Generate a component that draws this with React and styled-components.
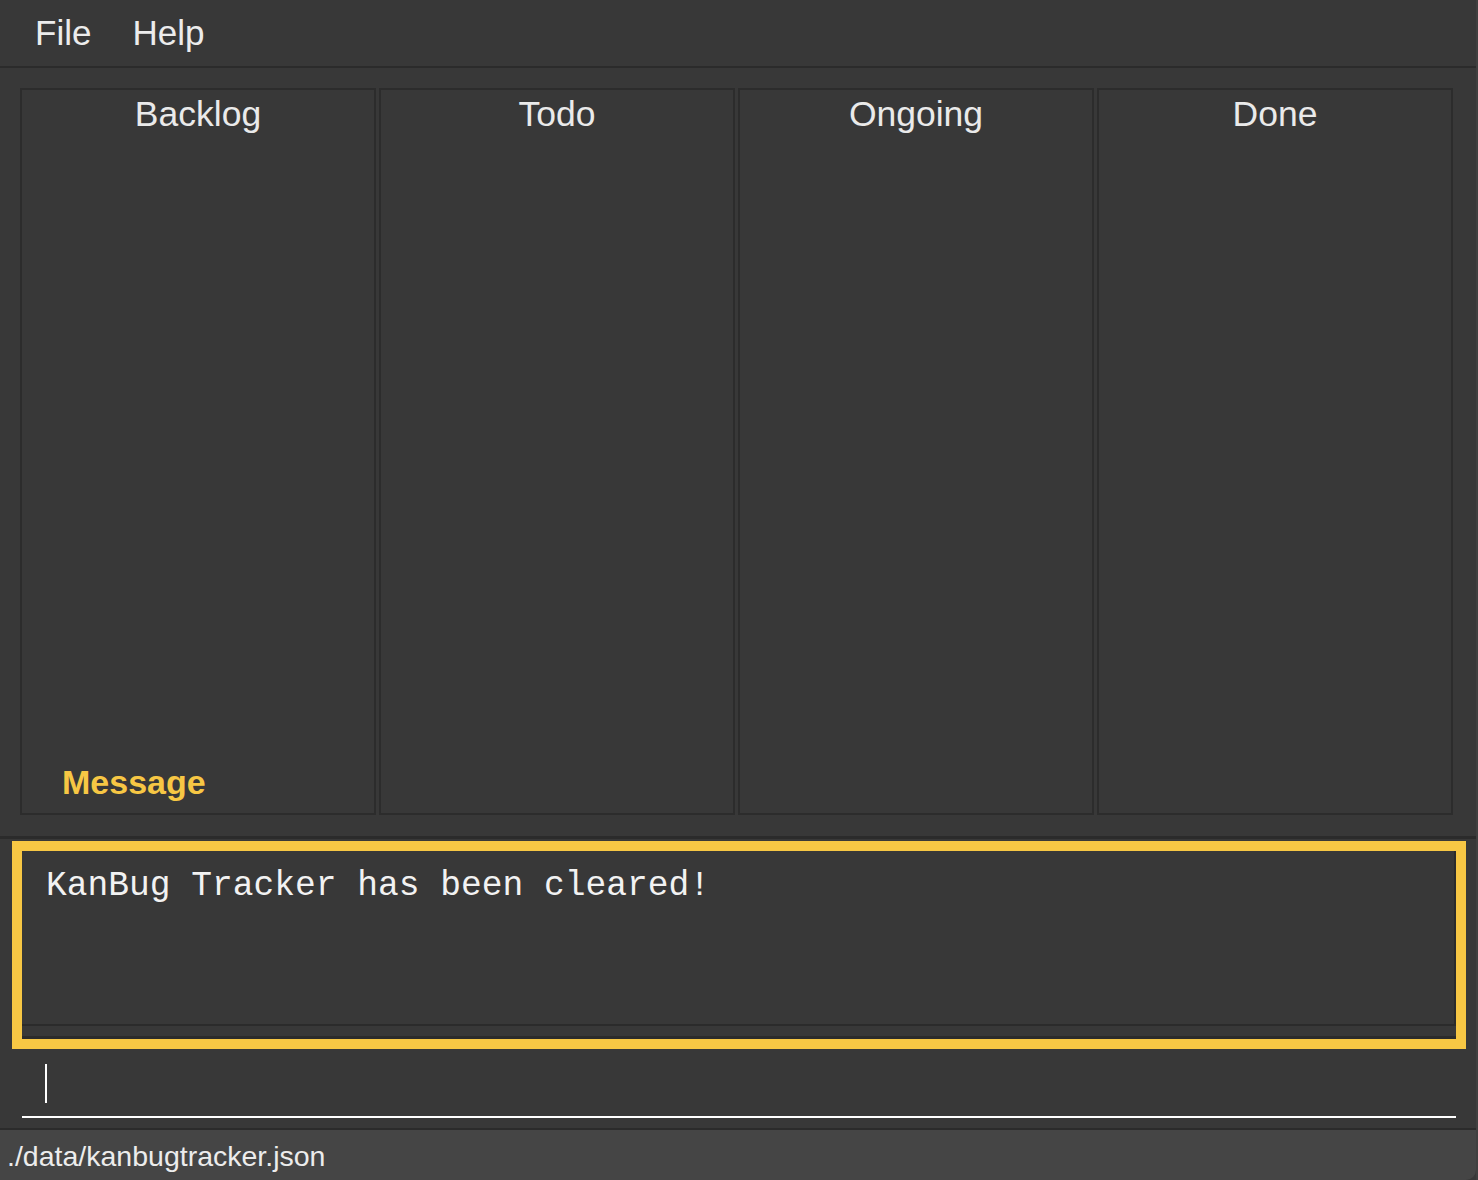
import styled, { createGlobalStyle } from 'styled-components';

const GlobalStyle = createGlobalStyle`
  html, body {
    margin: 0;
    padding: 0;
    background: #383838;
  }
  * { box-sizing: border-box; }
`;

const columns = ['Backlog', 'Todo', 'Ongoing', 'Done'];

export default function App() {
  return (
    <>
      <GlobalStyle />
      <Window>
        <MenuBar>
          <MenuItem>File</MenuItem>
          <MenuItem>Help</MenuItem>
        </MenuBar>

        <Board>
          {columns.map((name) => (
            <Column key={name}>
              <ColumnTitle>{name}</ColumnTitle>
            </Column>
          ))}
          <MessageLabel>Message</MessageLabel>
        </Board>

        <ResultSection>
          <ResultBox>
            <ResultText>KanBug Tracker has been cleared!</ResultText>
            <ResultFooter />
          </ResultBox>
        </ResultSection>

        <CommandSection>
          <CommandInput>
            <Caret />
          </CommandInput>
        </CommandSection>

        <StatusBar>./data/kanbugtracker.json</StatusBar>
      </Window>
    </>
  );
}

const Window = styled.div`
  width: 1478px;
  height: 1180px;
  display: flex;
  flex-direction: column;
  background: #383838;
  border-right: 2px solid #404040;
  font-family: 'Liberation Sans', Arial, sans-serif;
  overflow: hidden;
`;

const MenuBar = styled.div`
  height: 68px;
  flex-shrink: 0;
  display: flex;
  gap: 41px;
  padding: 13px 0 0 35px;
  border-bottom: 2px solid #2b2b2b;
`;

const MenuItem = styled.span`
  font-size: 35px;
  line-height: 40px;
  color: #ececec;
`;

const Board = styled.div`
  position: relative;
  flex: 1;
  display: grid;
  grid-template-columns: repeat(4, 356px);
  gap: 3px;
  padding: 20px 0 21px 20px;
`;

const Column = styled.div`
  border: 2px solid #2c2c2c;
  display: flex;
  flex-direction: column;
  align-items: center;
`;

const ColumnTitle = styled.div`
  padding-top: 4px;
  font-size: 35.5px;
  line-height: 40px;
  color: #eaeaea;
`;

const MessageLabel = styled.div`
  position: absolute;
  left: 62px;
  bottom: 34px;
  font-size: 34px;
  line-height: 40px;
  font-weight: bold;
  color: #f7c744;
`;

const ResultSection = styled.div`
  flex-shrink: 0;
  border-top: 3px solid #2b2b2b;
  padding: 2px 10px 0 12px;
`;

const ResultBox = styled.div`
  height: 208px;
  border: 10px solid #f7c744;
  display: flex;
  flex-direction: column;
`;

const ResultText = styled.div`
  height: 175px;
  padding: 15px 0 0 24px;
  border-right: 2px solid #2b2b2b;
  border-bottom: 2px solid #2b2b2b;
  font-family: 'Liberation Mono', 'Courier New', monospace;
  font-size: 34.6px;
  line-height: 40px;
  color: #f2f2f2;
`;

const ResultFooter = styled.div`
  flex: 1;
  border-bottom: 3px solid #2b2b2b;
`;

const CommandSection = styled.div`
  flex-shrink: 0;
  height: 81px;
  padding: 15px 20px 0 22px;
  border-bottom: 2px solid #2b2b2b;
`;

const CommandInput = styled.div`
  height: 54px;
  padding: 0 0 0 23px;
  border-bottom: 2px solid #ffffff;
`;

const Caret = styled.div`
  width: 2px;
  height: 39px;
  background: #ffffff;
`;

const StatusBar = styled.div`
  height: 50px;
  flex-shrink: 0;
  background: #454545;
  padding: 10px 0 0 7px;
  font-size: 28.5px;
  line-height: 32px;
  color: #ececec;
  border-bottom-right-radius: 10px;
`;
